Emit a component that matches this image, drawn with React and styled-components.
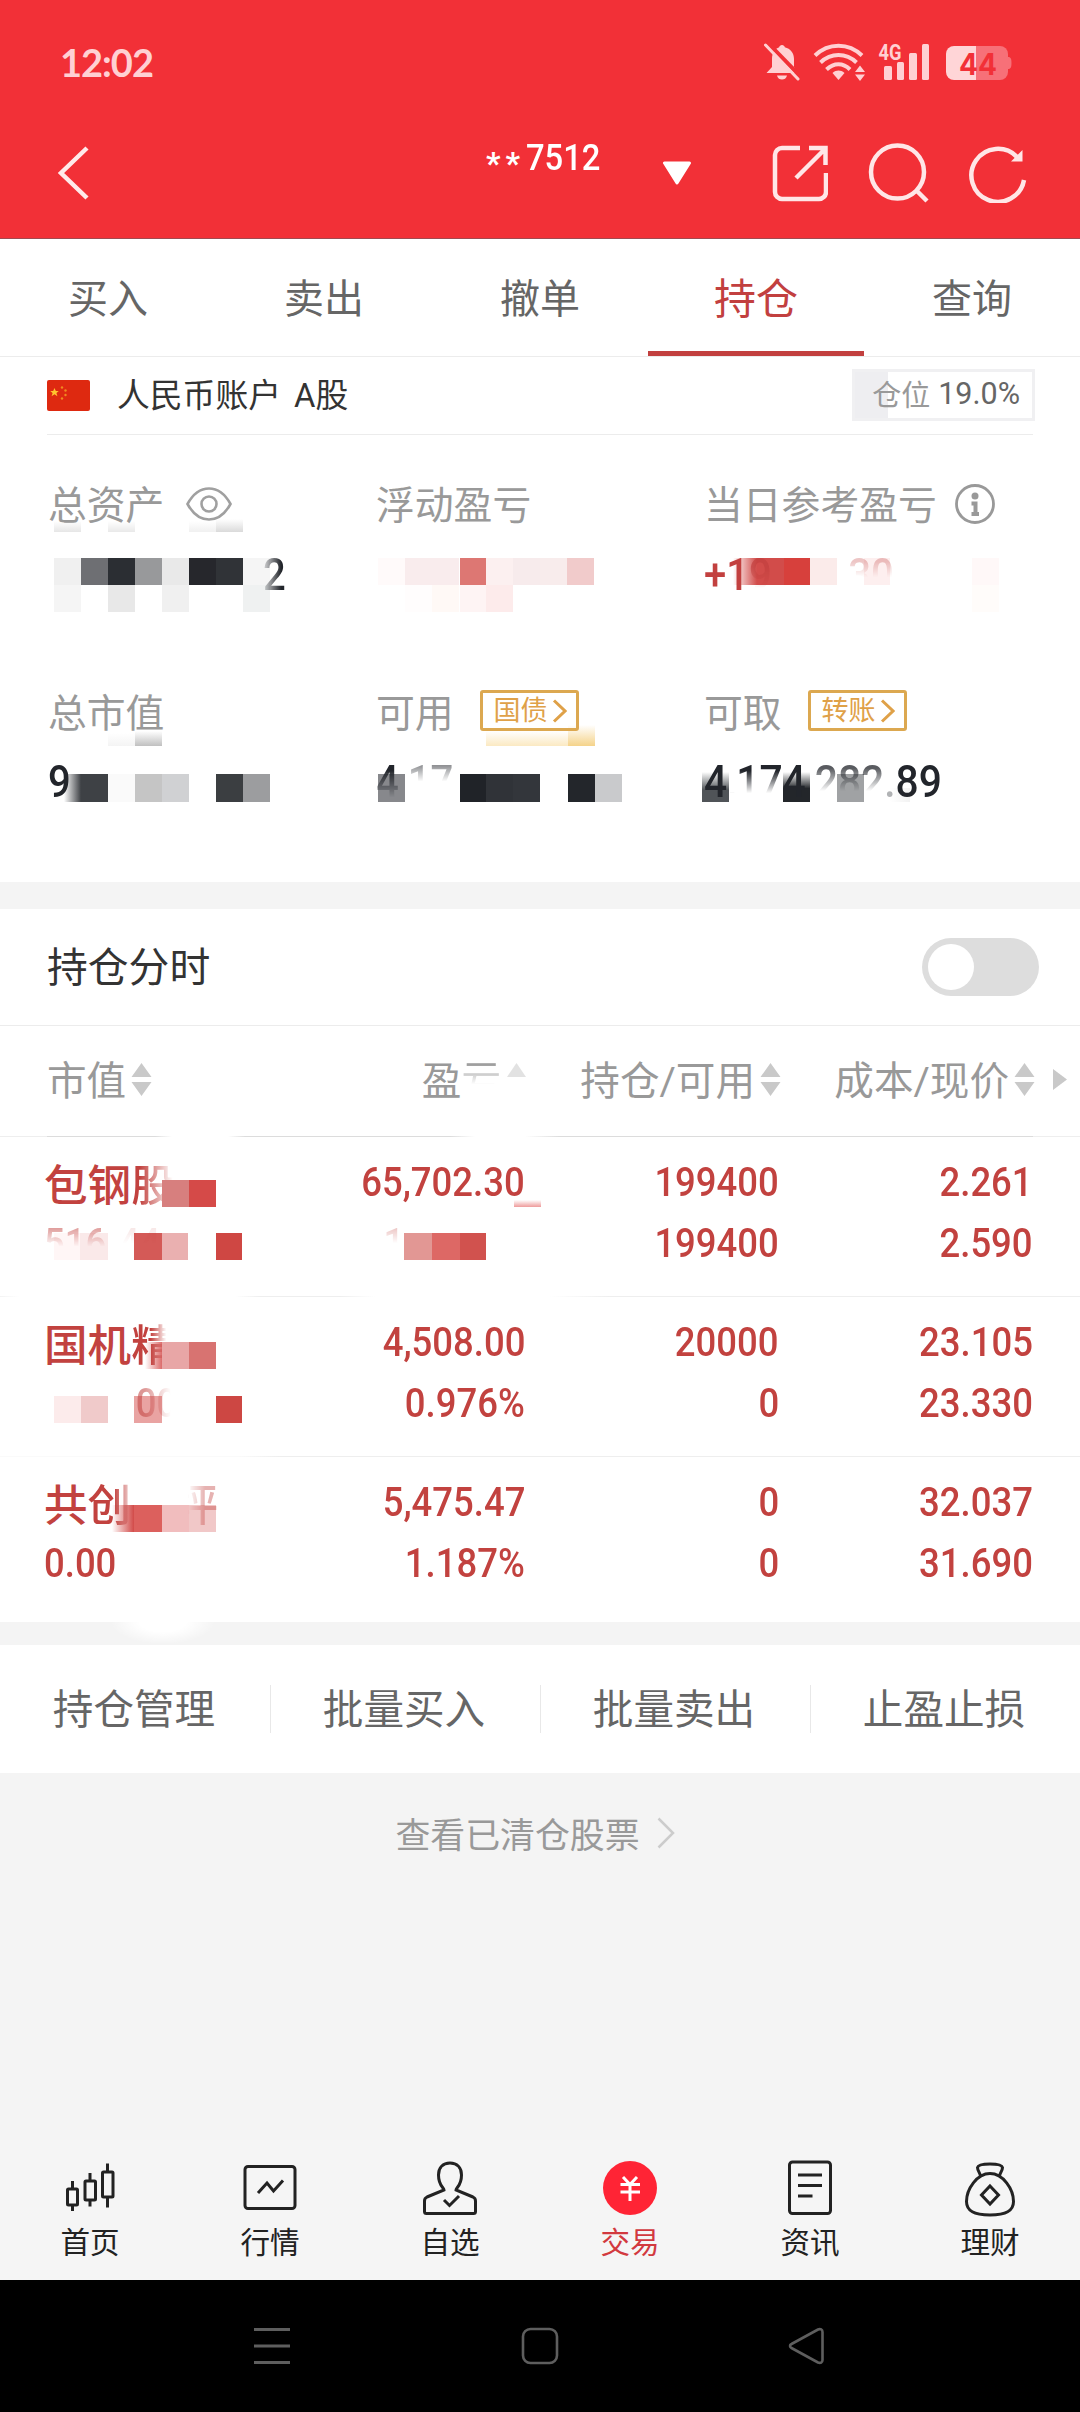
import React, { useState } from "react";
import styled, { createGlobalStyle } from "styled-components";

const GlobalStyle = createGlobalStyle`
  * {
    box-sizing: border-box;
  }

  body {
    margin: 0;
    background-color: #f4f4f4;
    font-family: Roboto, "Noto Sans CJK SC", sans-serif;
    color: #333333;
  }
`;

// Styled Components
const Page = styled.div`
  display: flex;
  flex-direction: column;
  width: 1080px;
  height: 2412px;
  overflow: hidden;
  background-color: #f4f4f4;
`;

const Header = styled.header`
  height: 239px;
  flex-shrink: 0;
  background-color: #f23037;
  border-bottom: 1px solid #a04a50;
`;

const StatusBar = styled.div`
  display: flex;
  justify-content: space-between;
  align-items: center;
  height: 107px;
  padding: 16px 68px 0 60px;
`;

const Clock = styled.span`
  font-family: Lato, sans-serif;
  font-weight: 700;
  font-size: 38px;
  line-height: 40px;
  letter-spacing: -1px;
  color: #ffd0d3;
`;

const StatusIcons = styled.div`
  display: flex;
  align-items: center;
`;

const TitleBar = styled.div`
  display: flex;
  align-items: center;
  height: 131px;
  padding: 0 52px 0 54px;
`;

const Account = styled.div`
  display: flex;
  align-items: center;
  gap: 1px;
  margin-left: 394px;
  width: 176px;
  padding-bottom: 30px;
  font-size: 36px;
  font-weight: 500;
  line-height: 40px;
  color: #ffffff;
`;

const Stars = styled.span`
  font-size: 32px;
  font-weight: 700;
  letter-spacing: 5px;
  line-height: 30px;
  padding-top: 10px;
`;

const Condensed = styled.span`
  display: inline-block;
  transform: scaleX(${({ $scale }) => $scale || 0.89});
  transform-origin: ${({ $origin }) => $origin || "left"} center;
  white-space: nowrap;
`;

const Tabs = styled.nav`
  display: grid;
  grid-template-columns: repeat(5, 1fr);
  height: 118px;
  flex-shrink: 0;
  background-color: #ffffff;
  border-bottom: 1px solid #ececec;
`;

const Tab = styled.button`
  border: none;
  border-bottom: 5px solid ${({ $active }) => ($active ? "#c2403f" : "transparent")};
  background: none;
  padding: 1px 0 0;
  font-family: inherit;
  font-size: ${({ $active }) => ($active ? "42px" : "40px")};
  color: ${({ $active }) => ($active ? "#c2403f" : "#666666")};
`;

const Card = styled.section`
  display: flex;
  flex-direction: column;
  flex-shrink: 0;
  background-color: #ffffff;
`;

const AccountRow = styled.div`
  display: flex;
  align-items: center;
  height: 78px;
  margin: 0 47px;
  border-bottom: 1px solid #ececec;
  font-size: 32.8px;
`;

const AccountName = styled.span`
  margin-left: 27px;
  flex: 1;
  word-spacing: 5px;
  line-height: 40px;
`;

const PositionBadge = styled.div`
  display: flex;
  align-items: center;
  justify-content: flex-end;
  width: 183px;
  height: 52px;
  margin: -1px -2px 0 0;
  padding: 0 12px 4px 0;
  gap: 8px;
  border: 3px solid #f0f0f2;
  background: linear-gradient(90deg, #eeeef1 33px, #ffffff 33px);
  font-size: 29px;
  color: #999999;

  b {
    font-weight: 400;
    font-size: 30.5px;
    color: #666666;
  }
`;

const Stats = styled.div`
  display: grid;
  grid-template-columns: repeat(3, 328px);
  grid-auto-rows: 208px;
  height: 447px;
  padding: 0 48px;
`;

const Stat = styled.div`
  position: relative;
  isolation: isolate;
  padding-top: 39px;
`;

const StatLabel = styled.div`
  display: flex;
  align-items: center;
  height: 60px;
  font-size: 38.8px;
  color: #999999;
  white-space: nowrap;
`;

const LabelText = styled.span`
  padding-bottom: 5px;
`;

const StatValue = styled.div`
  display: flex;
  align-items: center;
  height: 60px;
  margin-top: ${({ $top }) => $top || 10}px;
  padding-left: ${({ $indent }) => $indent || 0}px;
  font-size: 45px;
  font-weight: 500;
  color: ${({ $red }) => ($red ? "#c2403f" : "#22252b")};
`;

const Tag = styled.button`
  display: flex;
  align-items: center;
  gap: 4px;
  height: 41px;
  width: 99px;
  margin: -3px 0 0 26px;
  padding: 0 8px 0 11px;
  border: 3px solid #dca850;
  border-radius: 3px;
  background: none;
  font-family: inherit;
  font-size: 27px;
  line-height: 30px;
  color: #dfa148;
`;

const Fade = styled.span`
  display: inline-block;
  white-space: pre;
  padding-left: ${({ $l }) => $l || 0}px;
  padding-right: ${({ $r }) => $r || 0}px;
  opacity: ${({ $opacity }) => $opacity || 1};
  mask-image: linear-gradient(
    ${({ $to }) => $to || "180deg"},
    #000 ${({ $from }) => $from || "25%"},
    transparent ${({ $end }) => $end || "70%"}
  );
`;

const Dim = styled.span`
  opacity: 0.35;
`;

// one pixelated block lying over a hidden figure
const Block = styled.i`
  position: absolute;
  z-index: ${({ $over }) => ($over ? 1 : -1)};
  left: ${({ $x }) => $x}px;
  top: ${({ $y }) => $y}px;
  width: ${({ $w }) => $w || 27}px;
  height: ${({ $h }) => $h || 27}px;
  background: ${({ $bg }) => $bg};
`;

const Gap = styled.div`
  height: ${({ $h }) => $h}px;
  flex-shrink: 0;
  background: ${({ $bg }) => $bg || "#f4f4f4"};
`;

const ToggleRow = styled.div`
  display: flex;
  align-items: center;
  justify-content: space-between;
  height: 117px;
  padding: 0 41px 0 47px;
  border-bottom: 1px solid #ececec;
  font-size: 40.8px;
`;

const Switch = styled.button`
  display: flex;
  align-items: center;
  justify-content: ${({ $on }) => ($on ? "flex-end" : "flex-start")};
  width: 117px;
  height: 58px;
  padding: 6px;
  border: none;
  border-radius: 29px;
  background-color: ${({ $on }) => ($on ? "#c2403f" : "#dddddd")};
`;

const Knob = styled.span`
  width: 46px;
  height: 46px;
  border-radius: 50%;
  background-color: #ffffff;
`;

const Columns = styled.div`
  display: grid;
  grid-template-columns: 225px 254px 254px 254px 46px;
  padding-left: 47px;
`;

const TableHead = styled(Columns)`
  align-items: center;
  height: 110px;
  padding-bottom: 2px;
  font-size: 39.6px;
  color: #999999;
`;

const HeadCell = styled.div`
  display: flex;
  align-items: center;
  justify-content: ${({ $left }) => ($left ? "flex-start" : "flex-end")};
  gap: 5px;
  margin-right: -1px;
  white-space: nowrap;
`;

const Line = styled.div`
  height: 1px;
  background: ${({ $bg }) => $bg || "#eeeeee"};
`;

const Holding = styled(Columns)`
  position: relative;
  isolation: isolate;
  height: ${({ $h }) => $h || 159}px;
  padding-top: 15px;
  grid-auto-rows: 61px;
  align-items: center;
  font-size: 41px;
  font-weight: 500;
  color: #c2423f;
`;

const Figure = styled.div`
  padding-right: 1px;
  text-align: right;
  line-height: 61px;
  white-space: pre;
`;

const Name = styled.div`
  display: flex;
  margin-left: -3px;
  font-size: 43.6px;
  line-height: 61px;
  padding-top: 8px;
  white-space: nowrap;
`;

const Worth = styled.div`
  margin-left: -3px;
  line-height: 61px;
  white-space: pre;
`;

const Actions = styled.div`
  display: grid;
  grid-template-columns: repeat(4, 1fr);
  align-items: center;
  height: 128px;
  flex-shrink: 0;
  background-color: #ffffff;
`;

const Action = styled.button`
  height: 48px;
  padding: 3px 3px 0 0;
  border: none;
  border-left: 1px solid ${({ $first }) => ($first ? "transparent" : "#e8e8e8")};
  background: none;
  font-family: inherit;
  font-size: 40.6px;
  line-height: 45px;
  color: #666666;
`;

const ClearedLink = styled.div`
  display: flex;
  justify-content: center;
  align-items: center;
  gap: 17px;
  height: 119px;
  padding-right: 10px;
  font-size: 34.9px;
  color: #999999;
`;

const BottomNav = styled.nav`
  display: grid;
  grid-template-columns: repeat(6, 1fr);
  height: 140px;
  margin-top: auto;
  padding-top: 18px;
  flex-shrink: 0;
  background-color: #f5f5f5;
`;

const NavItem = styled.div`
  display: flex;
  flex-direction: column;
  align-items: center;
  gap: 3px;
  font-size: 29.6px;
  line-height: 44px;
  color: ${({ $active }) => ($active ? "#d2393f" : "#222222")};
`;

const SystemBar = styled.div`
  display: flex;
  align-items: center;
  justify-content: space-between;
  height: 132px;
  padding: 0 255px 0 253px;
  flex-shrink: 0;
  background-color: #000000;
`;

// Icons
const BellOff = () => (
  <svg width="36" height="38" viewBox="0 0 36 38">
    <path
      d="M18 2c1.500 0 2.500 1 2.800 2.200C26.500 5.500 30 10 30 16v8l3.500 6H2.500L8 24v-8C8 10 11 5.500 15.200 4.200 15.500 3 16.500 2 18 2z"
      fill="#ffd0d3"
    />
    <path d="M13 32.500h10c-1 3-2.500 4-5 4s-4-1-5-4z" fill="#ffd0d3" />
    <path d="M3 -1L37 34" stroke="#f23037" strokeWidth="4" />
    <path d="M1.500 2L34 36" stroke="#ffd0d3" strokeWidth="3" strokeLinecap="round" />
  </svg>
);

const Wifi = () => (
  <svg width="52" height="38" viewBox="0 0 52 38" fill="none" stroke="#ffd0d3" strokeWidth="4">
    <path d="M2 12.500C15.500 -0.500 35.500 -0.500 49 12.500" />
    <path d="M7.500 19.500C18 9.500 33 9.500 43.500 19.500" />
    <path d="M13.500 26.500C21 19.500 30 19.500 37 26.500" />
    <path d="M19.500 30c4-3.200 8-3.200 12 0l-6 7z" fill="#ffd0d3" stroke="none" />
    <path d="M42 29l5-6.500 5 6.500zM42 31.500h10L47 38z" fill="#ffd0d3" stroke="none" />
  </svg>
);

const Signal = () => (
  <svg width="52" height="46" viewBox="0 -4 52 46" fill="#ffd0d3">
    <text x="0.500" y="16.500" fontFamily="Roboto" fontWeight="700" fontSize="22" textLength="23" lengthAdjust="spacingAndGlyphs">
      4G
    </text>
    <rect x="6" y="23" width="8" height="14" rx="1.500" />
    <rect x="19" y="19" width="7" height="18" rx="1.500" />
    <rect x="31" y="10" width="8" height="27" rx="1.500" />
    <rect x="44" y="1" width="7" height="36" rx="1.500" />
  </svg>
);

const Battery = () => (
  <svg width="67" height="38" viewBox="0 0 67 38">
    <path d="M31 3h24a8 8 0 0 1 8 8v18a8 8 0 0 1-8 8H31z" fill="#f77078" />
    <path d="M9 3h22v34H9a8 8 0 0 1-8-8V11a8 8 0 0 1 8-8z" fill="#ffd5d7" />
    <path d="M63 14c2.500 0 3.500 1.500 3.500 6s-1 6-3.500 6z" fill="#f77078" />
    <text x="14" y="31.500" fontFamily="Inter" fontWeight="700" fontSize="30" fill="#f23037" textLength="38" lengthAdjust="spacingAndGlyphs">
      44
    </text>
  </svg>
);

const BackIcon = () => (
  <svg width="38" height="56" viewBox="0 0 38 56" fill="none" stroke="#ffeaea" strokeWidth="4.500">
    <path d="M33 3L7 28l26 25" />
  </svg>
);

const ShareIcon = () => (
  <svg width="56" height="60" viewBox="0 0 56 60" fill="none" stroke="#ffe6e7" strokeWidth="4.500">
    <path d="M28 5H10a7 7 0 0 0-7 7v37a7 7 0 0 0 7 7h37a7 7 0 0 0 7-7V30" />
    <path d="M37 5h16.500v17M53 6L24 35" />
  </svg>
);

const SearchIcon = () => (
  <svg width="62" height="60" viewBox="0 0 62 60" fill="none" stroke="#ffe6e7" strokeWidth="4.500">
    <circle cx="29.500" cy="29" r="26.500" />
    <path d="M48 47l11 11" />
  </svg>
);

const RefreshIcon = () => (
  <svg width="58" height="60" viewBox="0 0 58 60" fill="none" stroke="#ffe6e7" strokeWidth="4.500">
    <path d="M48 14A26.500 26.500 0 1 0 55 37" />
    <path d="M42 18.500h11.500V7z" fill="#ffe6e7" stroke="none" />
  </svg>
);

const SvgGap = styled.span`
  display: flex;
  margin-left: ${({ $l }) => $l}px;
`;

const Flag = () => (
  <svg width="43" height="31" viewBox="0 0 43 31">
    <rect width="43" height="31" rx="2" fill="#de2910" />
    <path d="M7.500 8l1.300 3h3l-2.400 2 1 3.200-2.900-2-2.900 2 1-3.200-2.400-2h3z" fill="#ffc42e" />
    <g fill="#f08a20">
      <circle cx="15" cy="7.500" r="1.200" />
      <circle cx="18.500" cy="10.500" r="1.200" />
      <circle cx="18.500" cy="15" r="1.200" />
      <circle cx="15" cy="18.500" r="1.200" />
    </g>
  </svg>
);

const Eye = () => (
  <svg width="46" height="34" viewBox="0 0 46 34" fill="none" stroke="#a0a0a0" strokeWidth="2.600">
    <path d="M1.500 17C7 7 14 1.500 23 1.500S39 7 44.500 17C39 27 32 32.500 23 32.500S7 27 1.500 17z" />
    <circle cx="23" cy="17" r="7.500" />
  </svg>
);

const Info = () => (
  <svg width="40" height="40" viewBox="0 0 40 40" fill="none" stroke="#999999">
    <circle cx="20" cy="20" r="18.500" strokeWidth="2.800" />
    <circle cx="20" cy="12" r="3.500" fill="#999999" stroke="none" />
    <path d="M16.500 19.500h4v10.500M16.500 30h7.500" strokeWidth="4" />
  </svg>
);

const TagArrow = () => (
  <svg width="15" height="24" viewBox="0 0 15 24" fill="none" stroke="#dfa148" strokeWidth="3">
    <path d="M2 1.500L13 12 2 22.500" />
  </svg>
);

const Sort = () => (
  <svg width="21" height="38" viewBox="0 -2 21 38" fill="#c9c9c9">
    <path d="M10.500 0L20.500 14H.5zM10.500 33L20.500 19H.5z" />
  </svg>
);

const SortFaded = () => (
  <svg width="21" height="38" viewBox="0 -2 21 38" fill="#e2e2e2">
    <path d="M10.500 0L20 14H1z" />
  </svg>
);

const CandleIcon = () => (
  <svg width="60" height="60" viewBox="0 0 60 60" fill="none" stroke="#222222" strokeWidth="3">
    <rect x="7.500" y="31" width="10" height="16" rx="1" />
    <path d="M12.500 23v8M12.500 47v6" />
    <rect x="25" y="23" width="10.500" height="19" rx="1" />
    <path d="M30 15v8M30 42v6.500" />
    <rect x="42.500" y="14" width="10.500" height="25" rx="1" />
    <path d="M47.500 5.500V14M47.500 39v10.500" />
  </svg>
);

const QuoteIcon = () => (
  <svg width="60" height="60" viewBox="0 0 60 60" fill="none" stroke="#222222" strokeWidth="3">
    <rect x="5" y="8.500" width="50" height="42" rx="3" />
    <path d="M18 35l9-10 6.500 8L43 22.500" />
  </svg>
);

const PersonIcon = () => (
  <svg width="60" height="60" viewBox="0 0 60 60" fill="none" stroke="#222222" strokeWidth="3">
    <path d="M24 32c0-2.500-5.500-4-5.500-15C18.500 9.500 23 5 30 5s11.500 4.500 11.500 12c0 11-5.500 12.500-5.500 15l17 7c2.200 1 2.500 2 2.500 4v10.500c0 1.500-.5 2-2 2h-47c-1.500 0-2-.5-2-2V43c0-2 .3-3 2.500-4z" />
    <path d="M24 42l5.500 5.500L39 38" />
  </svg>
);

const TradeIcon = () => (
  <svg width="60" height="60" viewBox="0 0 60 60" fill="none" stroke="#ffffff" strokeWidth="3">
    <circle cx="30" cy="30" r="27" fill="#ff2435" stroke="none" />
    <path d="M23 19l7 7.500 7-7.500M20.500 26.500h19.500M20.500 34h19.500M30 26v17" />
  </svg>
);

const NewsIcon = () => (
  <svg width="60" height="60" viewBox="0 0 60 60" fill="none" stroke="#222222" strokeWidth="3">
    <rect x="9.500" y="4" width="41" height="51.500" rx="3" />
    <path d="M18 17h24M18 27.500h24M18 38h14.500" />
  </svg>
);

const BagIcon = () => (
  <svg width="60" height="60" viewBox="0 0 60 60" fill="none" stroke="#222222" strokeWidth="3">
    <path d="M20.500 18c-.5-3-3-5.500-3-8.500C18 7 24 6 30 6s12 1 12.500 3.500c0 3-2.500 5.500-3 8.500" />
    <path d="M30 15.500C17 15.500 6.500 31 6.500 43.500 6.500 53 14 57 30 57s23.500-4 23.500-13.500C53.500 31 43 15.500 30 15.500z" />
    <path d="M30 28l8.500 9-8.500 9-8.500-9z" />
  </svg>
);

const TABS = ["买入", "卖出", "撤单", "持仓", "查询"];
const ACTIONS = ["持仓管理", "批量买入", "批量卖出", "止盈止损"];
const NAV = [
  { label: "首页", Icon: CandleIcon },
  { label: "行情", Icon: QuoteIcon },
  { label: "自选", Icon: PersonIcon },
  { label: "交易", Icon: TradeIcon },
  { label: "资讯", Icon: NewsIcon },
  { label: "理财", Icon: BagIcon },
];

const up = (color) => `linear-gradient(0deg, ${color}, transparent)`;
const right = (color) => `linear-gradient(90deg, transparent, ${color})`;

// x, y, background, width, height, over the text
const MASKS = {
  assets: [
    [6, 86, up("#e6e6e6"), 27, 11],
    [60, 86, up("#e9e9e9"), 27, 11],
    [141, 86, up("#f0f0f0"), 27, 11],
    [168, 84, up("#dadada"), 27, 13],
    [6, 123, "#f0f0f0"],
    [33, 123, "#6e6f73"],
    [60, 123, "#2b2e33"],
    [87, 123, "#98999b"],
    [114, 123, "#e9e9e9"],
    [141, 123, "#26272c"],
    [168, 123, "#303337"],
    [195, 123, "#f5f5f5"],
    [6, 150, "#f5f5f5"],
    [60, 150, "#e8e8e8"],
    [114, 150, "#f0f0f0"],
    [195, 150, "#eff1f1"],
  ],
  floating: [
    [2, 123, "#fffafa"],
    [29, 123, "#f9eced"],
    [56, 123, "#f9eced"],
    [84, 123, "#dd7773"],
    [110, 123, "#fcf0f0"],
    [137, 123, "#f7ebec"],
    [164, 123, "#f8ecec"],
    [191, 123, "#f1cbcb"],
    [29, 150, "#fffdfd"],
    [56, 150, "#fff9f6"],
    [84, 150, "#fef4f4"],
    [110, 150, "#fdebeb"],
  ],
  today: [
    [29, 123, right("#d24c4a"), 24],
    [53, 123, "#d24c4a"],
    [80, 123, "#d7403c", 26],
    [106, 123, "#fbebea"],
    [160, 123, "#fdefef", 26],
    [268, 123, "#fff8f8"],
    [268, 150, "#fffcfa"],
  ],
  market: [
    [60, 90, up("#f4f4f4"), 27, 13],
    [87, 88, up("#c0c0c0"), 27, 15],
    [16, 131, right("#3e4145"), 17, 28],
    [33, 131, "#3e4145", 27, 28],
    [60, 131, "#fafafa", 27, 28],
    [87, 131, "#c5c5c5", 27, 28],
    [114, 131, "#d0d1d3", 27, 28],
    [168, 131, "#3b3e41", 27, 28],
    [195, 131, "#9c9d9f", 27, 28],
  ],
  usable: [
    [110, 88, up("#fbe9c2"), 82, 15],
    [192, 82, up("#f5d38a"), 27, 21],
    [2, 131, "#87888c", 27, 28],
    [84, 131, "#202328", 27, 28],
    [110, 131, "#303338", 27, 28],
    [137, 131, "#33363b", 27, 28],
    [192, 131, "#23262b", 27, 28],
    [219, 131, "#c9cacc", 27, 28],
  ],
  cash: [
    [-2, 129, "linear-gradient(0deg, #505458 40%, transparent)", 27, 30],
    [79, 129, "linear-gradient(0deg, #23262a 45%, transparent)", 27, 30],
    [133, 131, "#a0a2a4", 27, 28],
    [186, 145, right("#f2f2f2"), 20, 14],
  ],
  first: [
    [162, 43, "#d77f7e", 27, 27, true],
    [189, 43, "#d54a48", 27, 27, true],
    [54, 96, "#fff6f6"],
    [80, 96, "#fae9e9", 28],
    [134, 96, "#d45a57", 28],
    [162, 96, "#eab0b0", 26],
    [216, 96, "#cf4743", 26],
    [404, 96, "#e29794", 28],
    [432, 96, "#dd6865", 28],
    [460, 96, "#d1524e", 26],
    [514, 63, up("#ee9b9b"), 27, 7],
  ],
  second: [
    [145, 45, right("#dc6c6b"), 17, 27],
    [162, 45, "#e8a6a6", 27, 27, true],
    [189, 45, "#d87371", 27, 27, true],
    [54, 99, "#fcebeb"],
    [81, 99, "#f0caca"],
    [134, 99, "#e9a3a2", 28],
    [216, 99, "#cd4743", 26],
  ],
  third: [
    [112, 48, right("#d24a48"), 22],
    [134, 48, "#dc605d", 28, 27, true],
    [162, 48, "#f1bdbe"],
    [189, 48, "#f1c8c8"],
  ],
};

const Mosaic = ({ name }) =>
  MASKS[name].map(([x, y, bg, w, h, over], i) => (
    <Block key={i} $x={x} $y={y} $w={w} $h={h} $bg={bg} $over={over} />
  ));

const Num = ({ children }) => <Condensed $origin="right">{children}</Condensed>;

const App = () => {
  const [tab, setTab] = useState("持仓");
  const [intraday, setIntraday] = useState(false);

  return (
    <Page>
      <GlobalStyle />
      <Header>
        <StatusBar>
          <Clock>12:02</Clock>
          <StatusIcons>
            <BellOff />
            <SvgGap $l={13}><Wifi /></SvgGap>
            <SvgGap $l={13}><Signal /></SvgGap>
            <SvgGap $l={15}><Battery /></SvgGap>
          </StatusIcons>
        </StatusBar>
        <TitleBar>
          <BackIcon />
          <Account>
            <Stars>**</Stars>
            <Condensed $scale={0.91}>7512</Condensed>
          </Account>
          <svg width="30" height="24" viewBox="0 0 30 24">
            <path d="M2.500 2h25L15 22z" fill="#fff" stroke="#fff" strokeWidth="3" strokeLinejoin="round" />
          </svg>
          <SvgGap $l={80}><ShareIcon /></SvgGap>
          <SvgGap $l={40}><SearchIcon /></SvgGap>
          <SvgGap $l={39}><RefreshIcon /></SvgGap>
        </TitleBar>
      </Header>

      <Tabs>
        {TABS.map((t) => (
          <Tab key={t} $active={t === tab} onClick={() => setTab(t)}>
            {t}
          </Tab>
        ))}
      </Tabs>

      <Card>
        <AccountRow>
          <Flag />
          <AccountName>人民币账户 A股</AccountName>
          <PositionBadge>
            仓位<b>19.0%</b>
          </PositionBadge>
        </AccountRow>
        <Stats>
          <Stat>
            <StatLabel>
              <LabelText>总资产</LabelText>
              <SvgGap $l={22}><Eye /></SvgGap>
            </StatLabel>
            <StatValue $indent={215}>
              <Fade $to="270deg" $from="30%" $end="110%">
                <Condensed>2</Condensed>
              </Fade>
            </StatValue>
            <Mosaic name="assets" />
          </Stat>
          <Stat>
            <StatLabel>
              <LabelText>浮动盈亏</LabelText>
            </StatLabel>
            <Mosaic name="floating" />
          </Stat>
          <Stat>
            <StatLabel>
              <LabelText>当日参考盈亏</LabelText>
              <SvgGap $l={18}><Info /></SvgGap>
            </StatLabel>
            <StatValue $red>
              <Condensed>
                +1<Fade $opacity={0.7} $from="35%" $end="75%">9</Fade>
                <Fade $l={86} $opacity={0.3} $from="25%" $end="55%">30</Fade>
              </Condensed>
            </StatValue>
            <Mosaic name="today" />
          </Stat>
          <Stat>
            <StatLabel>
              <LabelText>总市值</LabelText>
            </StatLabel>
            <StatValue $top={9}>
              <Condensed>9</Condensed>
            </StatValue>
            <Mosaic name="market" />
          </Stat>
          <Stat>
            <StatLabel>
              <LabelText>可用</LabelText>
              <Tag>国债<TagArrow /></Tag>
            </StatLabel>
            <StatValue $top={9}>
              <Condensed>
                <Fade $from="30%" $end="80%">4</Fade>
                <Fade $opacity={0.5} $from="20%" $end="50%">,17</Fade>
              </Condensed>
            </StatValue>
            <Mosaic name="usable" />
          </Stat>
          <Stat>
            <StatLabel>
              <LabelText>可取</LabelText>
              <Tag>转账<TagArrow /></Tag>
            </StatLabel>
            <StatValue $top={9}>
              <Condensed $scale={0.905}>
                4<Fade $from="30%" $end="72%">,17</Fade>4
                <Fade $opacity={0.75} $from="25%" $end="68%">,282</Fade>
                <Dim>.</Dim>89
              </Condensed>
            </StatValue>
            <Mosaic name="cash" />
          </Stat>
        </Stats>
      </Card>

      <Gap $h={27} />

      <Card>
        <ToggleRow>
          <LabelText>持仓分时</LabelText>
          <Switch $on={intraday} onClick={() => setIntraday(!intraday)}>
            <Knob />
          </Switch>
        </ToggleRow>
        <TableHead>
          <HeadCell $left>
            <LabelText>市值</LabelText>
            <Sort />
          </HeadCell>
          <HeadCell>
            <LabelText>
              盈<Fade $from="25%" $end="62%">亏</Fade>
            </LabelText>
            <SortFaded />
          </HeadCell>
          <HeadCell>
            <LabelText>持仓/可用</LabelText>
            <Sort />
          </HeadCell>
          <HeadCell>
            <LabelText>成本/现价</LabelText>
            <Sort />
          </HeadCell>
          <SvgGap $l={19}>
            <svg width="14" height="23" viewBox="0 0 14 23">
              <path d="M0 0l14 10.500L0 21z" fill="#c9c9c9" />
            </svg>
          </SvgGap>
        </TableHead>
        <Line $bg="linear-gradient(90deg, #eee 47px, #dcdcdc 47px, #dcdcdc 155px, #fff 172px, #fff 228px, #dcdcdc 245px, #dcdcdc 450px, #fff 475px, #fff 525px, #dcdcdc 560px, #dcdcdc 1033px, #eee 1033px)" />
        <Holding>
          <Name>
            包钢<Fade $to="90deg" $from="20%" $end="95%">股</Fade>
          </Name>
          <Figure><Num>65,702.30</Num></Figure>
          <Figure><Num>199400</Num></Figure>
          <Figure><Num>2.261</Num></Figure>
          <span />
          <Worth>
            <Condensed>
              <Fade $opacity={0.6} $from="20%" $end="55%">516</Fade>
              <Fade $l={14} $opacity={0.15} $from="20%" $end="50%">44</Fade>
            </Condensed>
          </Worth>
          <Figure>
            <Num><Fade $r={136} $opacity={0.35} $from="20%" $end="50%">1</Fade></Num>
          </Figure>
          <Figure><Num>199400</Num></Figure>
          <Figure><Num>2.590</Num></Figure>
          <Mosaic name="first" />
        </Holding>
        <Line $bg="linear-gradient(90deg, #f3f3f3, #fff 20px, #fff 235px, #eee 260px, #eee 340px, #fff 375px, #fff 550px, #eee 610px)" />
        <Holding>
          <Name>
            国机<Fade $to="90deg" $from="45%" $end="80%">精</Fade>
          </Name>
          <Figure><Num>4,508.00</Num></Figure>
          <Figure><Num>20000</Num></Figure>
          <Figure><Num>23.105</Num></Figure>
          <span />
          <Worth>
            <Condensed>
              <Fade $l={103} $to="90deg" $opacity={0.55} $from="75%" $end="95%">00</Fade>
            </Condensed>
          </Worth>
          <Figure><Num>0.976%</Num></Figure>
          <Figure><Num>0</Num></Figure>
          <Figure><Num>23.330</Num></Figure>
          <Mosaic name="second" />
        </Holding>
        <Line $bg="linear-gradient(90deg, #fafafa 240px, #eee 280px)" />
        <Holding $h={165}>
          <Name>
            共<Fade $to="90deg" $from="60%" $end="110%">创</Fade>
            <Fade $l={43} $to="270deg" $opacity={0.4} $from="15%" $end="35%">坪</Fade>
          </Name>
          <Figure><Num>5,475.47</Num></Figure>
          <Figure><Num>0</Num></Figure>
          <Figure><Num>32.037</Num></Figure>
          <span />
          <Worth><Condensed>0.00</Condensed></Worth>
          <Figure><Num>1.187%</Num></Figure>
          <Figure><Num>0</Num></Figure>
          <Figure><Num>31.690</Num></Figure>
          <Mosaic name="third" />
        </Holding>
      </Card>

      <Gap $h={23} $bg="radial-gradient(ellipse 52px 22px at 163px 0, #fff 45%, transparent), #f4f4f4" />

      <Actions>
        {ACTIONS.map((a, i) => (
          <Action key={a} $first={i === 0}>
            {a}
          </Action>
        ))}
      </Actions>

      <ClearedLink>
        <span>查看已清仓股票</span>
        <svg width="18" height="32" viewBox="0 0 18 32" fill="none" stroke="#cccccc" strokeWidth="2.500">
          <path d="M1.500 1.500L16 16 1.500 30.500" />
        </svg>
      </ClearedLink>

      <BottomNav>
        {NAV.map(({ label, Icon }) => (
          <NavItem key={label} $active={label === "交易"}>
            <Icon />
            {label}
          </NavItem>
        ))}
      </BottomNav>

      <SystemBar>
        <svg width="38" height="38" viewBox="0 0 38 38" stroke="#5e5e5e" strokeWidth="3">
          <path d="M1 2.500h36M1 19h36M1 35.500h36" />
        </svg>
        <svg width="38" height="38" viewBox="0 0 38 38" fill="none" stroke="#5e5e5e" strokeWidth="2.600">
          <rect x="2" y="2" width="34" height="34" rx="7.500" />
        </svg>
        <svg width="37" height="38" viewBox="0 0 37 38" fill="none" stroke="#5e5e5e" strokeWidth="2.600">
          <path d="M3.500 17L30 2.500c2.500-1 4.500 0 4.500 2.500v28c0 2.500-2 3.500-4.500 2.500L3.500 21c-2-1-2-3 0-4z" />
        </svg>
      </SystemBar>
    </Page>
  );
};

export default App;
